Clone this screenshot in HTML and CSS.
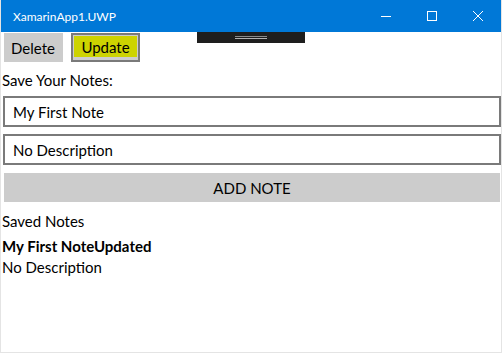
FILE: index.html
```html
<!DOCTYPE html>
<html lang="en">

<head>
    <meta charset="UTF-8">
    <meta name="viewport" content="width=device-width, initial-scale=1">
    <title>XamarinApp1.UWP</title>
    <link rel="stylesheet" href="styles.css">
</head>

<body>

    <div class="window">

        <header class="titlebar">
            <span class="title">XamarinApp1.UWP</span>
            <div class="caption">
                <span class="cap-btn">
                    <svg width="10" height="10" viewBox="0 0 10 10"><path d="M0 5.5h10" stroke="#fff" stroke-width="1"/></svg>
                </span>
                <span class="cap-btn">
                    <svg width="10" height="10" viewBox="0 0 10 10"><rect x="0.5" y="0.5" width="9" height="9" fill="none" stroke="#fff" stroke-width="1"/></svg>
                </span>
                <span class="cap-btn">
                    <svg width="10" height="10" viewBox="0 0 10 10"><path d="M0 0L10 10M10 0L0 10" stroke="#fff" stroke-width="1"/></svg>
                </span>
            </div>
        </header>

        <main class="content">
            <!-- note actions -->
            <div class="toolbar">
                <button class="btn btn-delete">Delete</button>
                <button class="btn btn-update"><span>Update</span></button>
            </div>

            <p class="label">Save Your Notes:</p>
            <input class="entry" type="text" value="My First Note">
            <input class="entry entry-desc" type="text" value="No Description">
            <button class="btn btn-add">ADD NOTE</button>

            <!-- list of saved notes -->
            <p class="label label-saved">Saved Notes</p>
            <div class="note">
                <div class="note-title">My First NoteUpdated</div>
                <div class="note-desc">No Description</div>
            </div>
        </main>

        <!-- debug toolbar handle that sits over the page -->
        <div class="debug-bar"><span class="grip"></span></div>

    </div>

</body>

</html>
```

FILE: styles.css
```css
body {
    margin: 0;
    background: #ffffff;
    font-family: Lato, "Open Sans", sans-serif;
    color: #000000;
}

.window {
    position: relative;
    width: 502px;
    height: 353px;
    box-sizing: border-box;
    border: 1px solid #e4e4e4;
    border-top: none;
    overflow: hidden;
}

.titlebar {
    display: flex;
    align-items: center;
    justify-content: space-between;
    height: 32px;
    margin: 0 -1px;
    background: #0078d7;
    color: #ffffff;
}

.title {
    padding-left: 13px;
    font-size: 12px;
}

.caption {
    display: flex;
    margin-right: 1px;
}

.cap-btn {
    display: flex;
    align-items: center;
    justify-content: center;
    width: 46px;
    height: 32px;
}

.content {
    padding-left: 1px;
}

.toolbar {
    display: flex;
    gap: 8px;
    margin-top: 1px;
    padding-left: 2px;
}

.btn {
    box-sizing: border-box;
    height: 29px;
    border: none;
    padding: 0;
    background: #cccccc;
    color: #000000;
    font-family: inherit;
    font-size: 15px;
}

.btn-delete {
    width: 59px;
    padding-right: 1px;
}

.btn-update {
    display: flex;
    width: 69px;
    padding: 1px 1px 3px 1px;
    border: 2px solid #7a7a7a;
}

.btn-update span {
    flex: 1;
    display: flex;
    align-items: center;
    justify-content: center;
    background: #cdd300;
}

.label {
    margin: 8px 0 6px 0;
    font-size: 15px;
    line-height: 20px;
}

.entry {
    display: block;
    box-sizing: border-box;
    width: 498px;
    height: 31px;
    margin: 0 0 0 1px;
    padding: 0 8px;
    border: 2px solid #7a7a7a;
    background: #ffffff;
    font-family: inherit;
    font-size: 15px;
    color: #000000;
    outline: none;
}

.entry-desc {
    margin-top: 7px;
}

.btn-add {
    display: block;
    width: 496px;
    margin: 8px 0 0 2px;
}

.label-saved {
    margin-top: 9px;
    margin-bottom: 5px;
}

.note {
    font-size: 15px;
    line-height: 20px;
}

.note-title {
    font-weight: bold;
}

.note-desc {
    margin-top: 1px;
}

.debug-bar {
    position: absolute;
    left: 196px;
    top: 32px;
    width: 108px;
    height: 11px;
    background: #1e1e1e;
}

.grip {
    position: absolute;
    left: 38px;
    top: 4px;
    width: 32px;
    height: 1px;
    border-top: 1px solid #8a8a8a;
    border-bottom: 1px solid #b0b0b0;
}
```
